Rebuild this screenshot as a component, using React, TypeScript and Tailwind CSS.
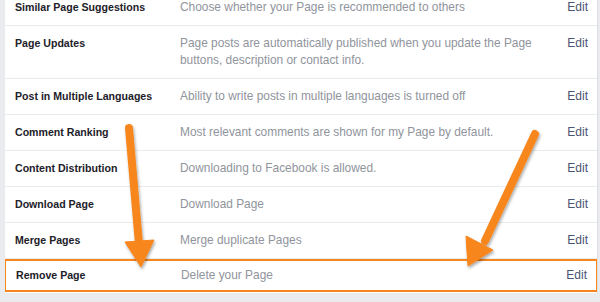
const rows = [
  { label: "Similar Page Suggestions", desc: "Choose whether your Page is recommended to others" },
  {
    label: "Page Updates",
    desc: "Page posts are automatically published when you update the Page buttons, description or contact info.",
  },
  { label: "Post in Multiple Languages", desc: "Ability to write posts in multiple languages is turned off" },
  { label: "Comment Ranking", desc: "Most relevant comments are shown for my Page by default." },
  { label: "Content Distribution", desc: "Downloading to Facebook is allowed." },
  { label: "Download Page", desc: "Download Page" },
  { label: "Merge Pages", desc: "Merge duplicate Pages" },
  { label: "Remove Page", desc: "Delete your Page", highlight: true },
];

function Arrows() {
  return (
    <svg className="absolute inset-0 pointer-events-none" width="600" height="302" viewBox="0 0 600 302">
      <defs>
        <filter id="sh" x="-50%" y="-50%" width="200%" height="200%">
          <feDropShadow dx="1" dy="2" stdDeviation="1.5" floodColor="#000" floodOpacity="0.35" />
        </filter>
      </defs>
      <g filter="url(#sh)" fill="#f7861c" stroke="#f7861c">
        {/* left arrow */}
        <line x1="129" y1="128" x2="139" y2="244" strokeWidth="8" strokeLinecap="round" />
        <polygon points="125,242 154,240 141,267" strokeWidth="1" strokeLinejoin="round" />
        {/* right arrow */}
        <line x1="535" y1="134" x2="485" y2="241" strokeWidth="8" strokeLinecap="round" />
        <polygon points="466,236 493,250 468,266" strokeWidth="1" strokeLinejoin="round" />
      </g>
    </svg>
  );
}

export default function App() {
  return (
    <div
      className="relative w-[600px] h-[302px] overflow-hidden bg-[#e9ebee]"
      style={{ fontFamily: '"Liberation Sans", Arial, sans-serif' }}
    >
      <div className="ml-[5px] mr-[2px] h-[293px] bg-white border-r border-[#dddfe2] overflow-hidden">
        <div className="-mt-[10px]">
          {rows.map((row) => (
            <div
              key={row.label}
              className={
                row.highlight
                  ? "flex items-start border-2 border-[#f7861c] py-[6px] -mx-px"
                  : "flex items-start border-b border-[#e9ebee] py-[9px]"
              }
            >
              <div className="w-[175px] shrink-0 pl-[10px] text-[10.6px] leading-[17px] font-bold text-[#1d2129]">
                {row.label}
              </div>
              <div className="w-[360px] shrink-0 text-[11.9px] leading-[17px] text-[#90949c]">{row.desc}</div>
              <div className="flex-1 text-right pr-[9px] text-[12px] leading-[17px] text-[#4b5574]">Edit</div>
            </div>
          ))}
        </div>
      </div>
      <Arrows />
    </div>
  );
}
